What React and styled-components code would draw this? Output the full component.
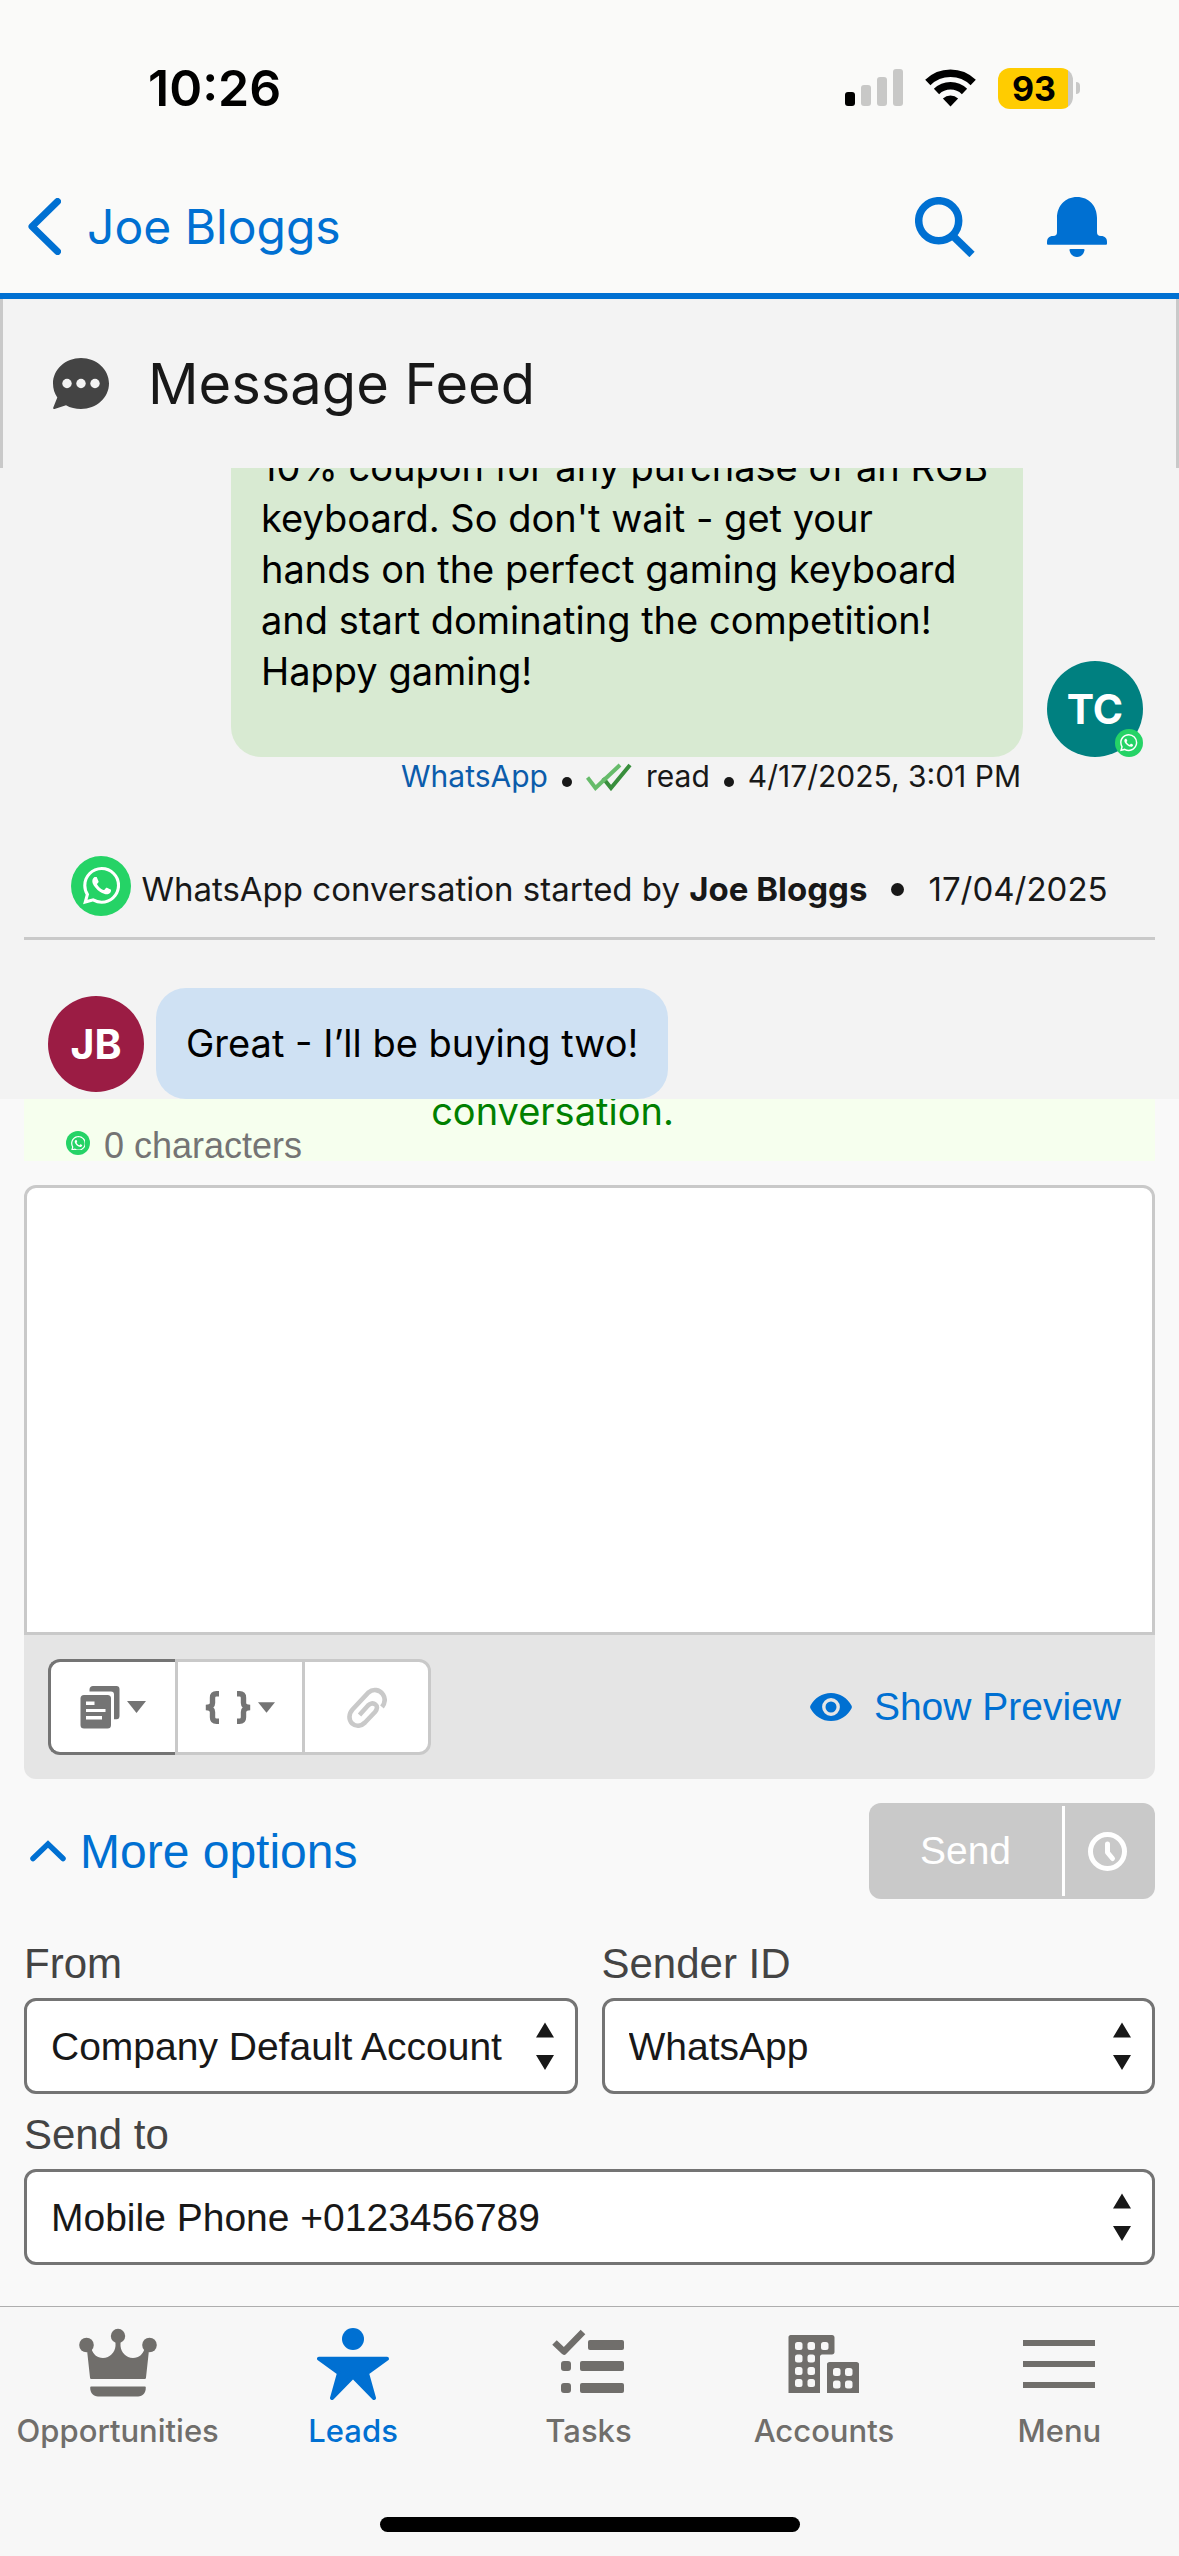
import React from "react";
import styled, { createGlobalStyle } from "styled-components";
import { SiWhatsapp } from "react-icons/si";

const tabs = [
  { id: "opportunities", label: "Opportunities" },
  { id: "leads", label: "Leads", active: true },
  { id: "tasks", label: "Tasks" },
  { id: "accounts", label: "Accounts" },
  { id: "menu", label: "Menu" },
];

const couponText = [
  "10% coupon for any purchase of an RGB",
  "keyboard. So don't wait - get your",
  "hands on the perfect gaming keyboard",
  "and start dominating the competition!",
  "Happy gaming!",
].join("\n");

const App = () => {
  return (
    <Page>
      <GlobalStyle />
      {renderStatusBar()}
      <TitleBar>
        <BackLink href="#lead">
          <BackIcon />
          Joe Bloggs
        </BackLink>
        <TitleActions>
          <IconButton type="button" aria-label="Search">
            <SearchIcon />
          </IconButton>
          <IconButton type="button" aria-label="Notifications">
            <BellIcon />
          </IconButton>
        </TitleActions>
      </TitleBar>
      <FeedHeader>
        <ChatIcon />
        <h1>Message Feed</h1>
      </FeedHeader>
      {renderFeed()}
      {renderComposer()}
      <TabBar>
        <TabList>{tabs.map(renderTab)}</TabList>
        <HomeIndicator />
      </TabBar>
    </Page>
  );
};

const renderStatusBar = () => (
  <StatusBar>
    <Clock>10:26</Clock>
    <StatusIcons>
      <SignalIcon />
      <WifiIcon />
      <Battery>
        <BatteryLevel>93</BatteryLevel>
        <BatteryCap />
      </Battery>
    </StatusIcons>
  </StatusBar>
);

const renderFeed = () => (
  <Feed>
    <Outgoing>
      <Bubble $color="#d8ead2" $grow>
        {couponText}
      </Bubble>
      <Avatar $color="#008080">
        TC
        <AvatarBadge>
          <WhatsAppMark $size={28} />
        </AvatarBadge>
      </Avatar>
    </Outgoing>
    <Meta>
      <a href="#whatsapp">WhatsApp</a>
      <Dot $size={10} $drop />
      <ReadIcon />
      <span>read</span>
      <Dot $size={10} $drop />
      <time>4/17/2025, 3:01 PM</time>
    </Meta>
    <SessionStart>
      <WhatsAppMark $size={60} />
      <span>
        WhatsApp conversation started by <strong>Joe Bloggs</strong>
      </span>
      <Dot $size={13} />
      <time>17/04/2025</time>
    </SessionStart>
    <Incoming>
      <Avatar $color="#9b1c44">JB</Avatar>
      <Bubble $color="#cfe1f3">Great - I’ll be buying two!</Bubble>
    </Incoming>
  </Feed>
);

const renderComposer = () => (
  <Composer>
    <Notice>
      <NoticeText>conversation.</NoticeText>
      <Counter>
        <WhatsAppMark $size={24} />0 characters
      </Counter>
    </Notice>
    <MessageBox aria-label="Message" />
    <Toolbar>
      <ButtonGroup>
        <ToolButton type="button" aria-label="Templates" $focused>
          <TemplateIcon />
          <CaretIcon width="19" height="12" />
        </ToolButton>
        <ToolButton type="button" aria-label="Merge fields">
          <BracesIcon />
          <CaretIcon width="17" height="11" />
        </ToolButton>
        <ToolButton type="button" aria-label="Attach file" disabled>
          <ClipIcon />
        </ToolButton>
      </ButtonGroup>
      <TextButton type="button">
        <EyeIcon />
        Show Preview
      </TextButton>
    </Toolbar>
    <ActionRow>
      <TextButton type="button" $large>
        <ChevronUpIcon />
        More options
      </TextButton>
      <SendGroup>
        <SendButton type="button" disabled>
          Send
        </SendButton>
        <ScheduleButton type="button" aria-label="Schedule" disabled>
          <ClockIcon />
        </ScheduleButton>
      </SendGroup>
    </ActionRow>
    <Fields>
      {renderField("from", "From", "Company Default Account")}
      {renderField("sender", "Sender ID", "WhatsApp")}
      {renderField("sendTo", "Send to", "Mobile Phone +0123456789", true)}
    </Fields>
  </Composer>
);

const renderField = (id, label, value, wide) => (
  <Field $wide={wide}>
    <label htmlFor={id}>{label}</label>
    <SelectBox>
      <select id={id} defaultValue={value}>
        <option>{value}</option>
      </select>
      <svg width="18" height="48" viewBox="0 0 18 48" aria-hidden="true">
        <path d="M9 0.500l9 15H0zM0 33h18l-9 15z" fill="#181818" />
      </svg>
    </SelectBox>
  </Field>
);

const renderTab = ({ id, label, active }) => {
  const Icon = tabIcons[id];
  return (
    <li key={id}>
      <TabLink
        href={`#${id}`}
        $active={active}
        aria-current={active ? "page" : undefined}
      >
        <Icon />
        {label}
      </TabLink>
    </li>
  );
};

const WhatsAppMark = ({ $size }) => (
  <Mark $size={$size}>
    <SiWhatsapp />
  </Mark>
);

const SignalIcon = () => (
  <svg width="58" height="38" viewBox="0 0 58 38" fill="#c8c8c7">
    <rect x="0" y="23" width="10" height="14" rx="3" fill="#000" />
    <rect x="16" y="16" width="10" height="21" rx="3" />
    <rect x="32" y="8" width="10" height="29" rx="3" />
    <rect x="48" y="0" width="10" height="37" rx="3" />
  </svg>
);

const WifiIcon = () => (
  <svg width="51" height="38" viewBox="0 0 51 38">
    <g fill="none" stroke="#000" strokeWidth="7.500">
      <path d="M2.800 13.500a32.500 32.500 0 0 1 45.400 0" />
      <path d="M11.500 22.500a20 20 0 0 1 28 0" />
    </g>
    <path d="M25.500 37.500l-7.600-8a11 11 0 0 1 15.200 0z" />
  </svg>
);

const BackIcon = () => (
  <svg width="33" height="57" viewBox="0 0 33 57">
    <path
      d="M29.500 3.500L4 28.500l25.500 25"
      fill="none"
      stroke="currentColor"
      strokeWidth="7"
      strokeLinecap="round"
      strokeLinejoin="round"
    />
  </svg>
);

const SearchIcon = () => (
  <svg width="60" height="60" viewBox="0 0 60 60">
    <g fill="none" stroke="currentColor" strokeWidth="7.500">
      <circle cx="23.700" cy="23.700" r="20" />
      <path d="M38 39l19 18.500" />
    </g>
  </svg>
);

const BellIcon = () => (
  <svg width="60" height="60" viewBox="0 0 60 60" fill="currentColor">
    <path d="M30 0c12 0 20 9 20 21v14c0 2.500 1 4 4 4 4 0 6 2.500 6 6v1.500c0 .8-.5 1.300-1.300 1.300H1.300C.5 47.800 0 47.300 0 46.500V45c0-3.500 2-6 6-6 3 0 4-1.500 4-4V21C10 9 18 0 30 0z" />
    <path d="M23.500 52h13c.8 0 1.200.5 1 1.200-.7 4-3.700 6.800-7.500 6.800s-6.800-2.800-7.500-6.800c-.2-.7.200-1.200 1-1.200z" />
  </svg>
);

const ChatIcon = () => (
  <svg width="56" height="52" viewBox="0 0 56 52">
    <path
      d="M28 0c15.500 0 28 11.400 28 25.500S43.500 51 28 51c-5.500 0-10.700-1.200-15-3.800L1.500 51c-1 .3-1.600-.3-1.300-1.200L4.300 39.500C1.500 35.500 0 30.700 0 25.500 0 11.400 12.500 0 28 0z"
      fill="#444"
    />
    <g fill="#f3f3f3">
      <circle cx="14" cy="25.500" r="4.700" />
      <circle cx="28" cy="25.500" r="4.700" />
      <circle cx="42" cy="25.500" r="4.700" />
    </g>
  </svg>
);

const ReadIcon = () => (
  <svg width="46" height="28" viewBox="0 0 46 28">
    <g fill="none" strokeWidth="4">
      <path d="M17 15l8 10L44 2" stroke="#388e3c" />
      <path d="M1.500 14.500L9.500 25 34 2" stroke="#66bb6a" />
    </g>
  </svg>
);

const TemplateIcon = () => (
  <svg width="40" height="43" viewBox="0 0 40 43" fill="currentColor">
    <path d="M13 0h23.500c1.800 0 3 1.200 3 3v27c0 2-1 3.300-3 3.300H34V8.500c0-2-1-3-3-3H9.500V3.500C9.500 1.300 11 0 13 0z" />
    <rect x="0.500" y="9" width="30.500" height="33.500" rx="3.500" />
    <path
      d="M6 15.500h8.500V19H6zM6 23h19.500v3H6zM6 30h16v3.500H6z"
      fill="#fff"
    />
  </svg>
);

const BracesIcon = () => (
  <svg width="46" height="33" viewBox="0 0 46 33">
    <g fill="none" stroke="currentColor" strokeWidth="5.400">
      <path d="M14 2.700h-2.500q-4 0-4 4v5.300q0 4-6.500 4.500 6.500.5 6.500 4.500v5.300q0 4 4 4h2.500" />
      <path d="M32 2.700h2.500q4 0 4 4v5.300q0 4 6.500 4.500-6.500.5-6.500 4.500v5.300q0 4-4 4h-2.500" />
    </g>
  </svg>
);

const CaretIcon = (props) => (
  <svg viewBox="0 0 19 12" fill="currentColor" {...props}>
    <path d="M0 0h19l-9.500 12z" />
  </svg>
);

const ClipIcon = () => (
  <svg width="40" height="41" viewBox="0 0 40 41">
    <path
      d="M35 20c3-4 3.500-8.500 1-12.500C32.500 2.500 26 1.500 21.500 5.500L5.500 22.500C1.500 27 1.500 33 5.200 36.500c4 3.500 9.300 2.500 12.800-1L28 25c2.500-3 2.500-6 .5-7.500-2.500-2-5.500-1-7.500 1L12.500 28"
      fill="none"
      stroke="currentColor"
      strokeWidth="4.600"
    />
  </svg>
);

const EyeIcon = () => (
  <svg width="42" height="28" viewBox="0 0 42 28">
    <path
      d="M.400 12.800C4.500 5 12.200 0 21 0s16.500 5 20.600 12.800c.4.800.4 1.600 0 2.400C37.500 23 29.800 28 21 28S4.500 23 .4 15.200c-.4-.8-.4-1.600 0-2.400z"
      fill="currentColor"
    />
    <circle
      cx="21"
      cy="14"
      r="7.200"
      fill="currentColor"
      stroke="#e5e5e5"
      strokeWidth="3.400"
    />
  </svg>
);

const ChevronUpIcon = () => (
  <svg width="36" height="22" viewBox="0 0 36 22">
    <path
      d="M3 18.500L18 4l15 14.500"
      fill="none"
      stroke="currentColor"
      strokeWidth="5.500"
      strokeLinecap="round"
    />
  </svg>
);

const ClockIcon = () => (
  <svg width="39" height="39" viewBox="0 0 39 39">
    <g fill="none" stroke="currentColor" strokeWidth="5">
      <circle cx="19.500" cy="19.500" r="17" />
      <path
        d="M19.500 12v8.500l5 6"
        strokeLinecap="round"
        strokeLinejoin="round"
      />
    </g>
  </svg>
);

const CrownIcon = () => (
  <svg width="78" height="72" viewBox="0 0 78 72" fill="currentColor">
    <circle cx="7.500" cy="17" r="7.300" />
    <circle cx="39" cy="8" r="7.200" />
    <circle cx="70.500" cy="17" r="7.300" />
    <path d="M8 22l4.500-1C14 26 18 30 24 30c7 0 12-6 12.500-12V12h5v6C42 24 47 30 54 30c6 0 10-4 11.500-9l4.500 1-3 27.500c-.1 1-.7 1.500-1.500 1.500h-53c-.8 0-1.400-.5-1.500-1.500z" />
    <path d="M12.500 58.500h53c.9 0 1.300.5 1.300 1.300 0 5-3 8.700-7.800 8.700H19c-4.800 0-7.800-3.700-7.800-8.700 0-.8.400-1.300 1.300-1.300z" />
  </svg>
);

const PersonIcon = () => (
  <svg width="72" height="72" viewBox="0 0 72 72" fill="currentColor">
    <circle cx="36" cy="11" r="11" />
    <path
      d="M2 30.700h68L50 45l7 25-21-21.500L15 70l7-25z"
      stroke="currentColor"
      strokeWidth="4"
      strokeLinejoin="round"
    />
  </svg>
);

const TaskIcon = () => (
  <svg width="72" height="72" viewBox="0 0 72 72" fill="currentColor">
    <path
      d="M2.500 14.500l9.500 9L31 4"
      fill="none"
      stroke="currentColor"
      strokeWidth="6.500"
      strokeLinejoin="round"
    />
    <rect x="36" y="12" width="36" height="10" rx="2" />
    <rect x="9" y="33" width="10" height="10" rx="3" />
    <rect x="28" y="33" width="44" height="10" rx="2" />
    <rect x="9" y="55" width="10" height="10" rx="3" />
    <rect x="28" y="55" width="44" height="10" rx="2" />
  </svg>
);

const windows = [
  [7, 14], [19.5, 14], [33, 14],
  [7, 26.500], [19.5, 26.500],
  [7, 39], [19.5, 39],
  [7, 51], [19.5, 51],
  [45, 40], [57, 40],
  [45, 52.500], [57, 52.500],
];

const BuildingIcon = () => (
  <svg width="71" height="72" viewBox="0 0 71 72" fill="currentColor">
    <path d="M2.500 7H44c1.500 0 2.500 1 2.500 2.500V24c0 1.500-1 2.500-2.500 2.500H34c-1 0-2 1-2 2V65H.500V9C.5 8 1.500 7 2.500 7z" />
    <path d="M41.500 34h27c1.500 0 2.500 1 2.500 2v29H39V36c0-1 1-2 2.500-2z" />
    {windows.map(([x, y]) => (
      <rect
        key={`${x}-${y}`}
        x={x}
        y={y}
        width="7.500"
        height="8"
        rx="2.500"
        fill="#f7f7f7"
      />
    ))}
  </svg>
);

const MenuIcon = () => (
  <svg width="72" height="72" viewBox="0 0 72 72" fill="currentColor">
    <path d="M0 12h72v6H0zM0 33h72v6H0zM0 54h72v6H0z" />
  </svg>
);

const tabIcons = {
  opportunities: CrownIcon,
  leads: PersonIcon,
  tasks: TaskIcon,
  accounts: BuildingIcon,
  menu: MenuIcon,
};

const GlobalStyle = createGlobalStyle`
  * {
    box-sizing: border-box;
  }
  body {
    margin: 0;
    background: #f9f9f9;
    color: #181818;
    font-family: Inter, "Liberation Sans", sans-serif;
  }
  button, textarea, select {
    font-family: "Liberation Sans", Arial, sans-serif;
  }
  svg {
    display: block;
    flex-shrink: 0;
  }
`;

const Page = styled.div`
  display: flex;
  flex-direction: column;
  height: 100vh;
  overflow: hidden;
`;

const StatusBar = styled.div`
  display: flex;
  align-items: center;
  justify-content: space-between;
  height: 160px;
  flex-shrink: 0;
  padding: 16px 99px 0 148px;
  background: #fafaf9;
`;
const Clock = styled.time`
  color: #000;
  font-size: 50px;
  font-weight: 600;
`;
const StatusIcons = styled.div`
  display: flex;
  align-items: center;
  gap: 22px;
`;
const Battery = styled.div`
  display: flex;
  align-items: center;
  gap: 3px;
`;
const BatteryLevel = styled.span`
  width: 75px;
  height: 41px;
  padding-right: 3px;
  border-radius: 12px;
  background: linear-gradient(90deg, #ffcc00 70px, #c8c8c7 70px);
  color: #000;
  font-size: 34px;
  font-weight: 700;
  line-height: 41px;
  text-align: center;
`;
const BatteryCap = styled.span`
  width: 4px;
  height: 12px;
  border-radius: 0 4px 4px 0;
  background: #c8c8c7;
`;

const TitleBar = styled.header`
  display: flex;
  align-items: center;
  justify-content: space-between;
  height: 139px;
  flex-shrink: 0;
  padding: 0 72px 0 28px;
  border-bottom: 6px solid #0070d2;
  background: #fafaf9;
`;
const BackLink = styled.a`
  display: flex;
  align-items: center;
  gap: 26px;
  color: #0070d2;
  font-size: 48px;
  text-decoration: none;
`;
const TitleActions = styled.div`
  display: flex;
  gap: 72px;
`;
const IconButton = styled.button`
  padding: 0;
  border: 0;
  background: none;
  color: #0070d2;
`;

const FeedHeader = styled.div`
  display: flex;
  align-items: center;
  gap: 39px;
  height: 169px;
  flex-shrink: 0;
  padding: 0 50px;
  border: solid #c9c9c9;
  border-width: 0 3px;
  background: #f3f3f3;
  & > h1 {
    margin: 0;
    font-size: 56px;
    font-weight: 400;
  }
`;

const Feed = styled.main`
  display: flex;
  flex: 1;
  flex-direction: column;
  justify-content: flex-end;
  min-height: 0;
  overflow: hidden;
  background: #f3f3f3;
`;
const Outgoing = styled.div`
  display: flex;
  align-items: flex-end;
  gap: 24px;
  padding: 0 36px 0 231px;
`;
const Incoming = styled.div`
  display: flex;
  align-items: center;
  gap: 12px;
  padding: 48px 48px 0;
`;
const Bubble = styled.div`
  flex: ${({ $grow }) => ($grow ? 1 : "none")};
  padding: ${({ $grow }) => ($grow ? "30px 30px 60px" : "30px")};
  border-radius: 30px;
  background: ${({ $color }) => $color};
  color: #000;
  font-size: 38px;
  line-height: 51px;
  white-space: pre-line;
`;
const Avatar = styled.div`
  position: relative;
  display: flex;
  align-items: center;
  justify-content: center;
  width: 96px;
  height: 96px;
  flex-shrink: 0;
  border-radius: 50%;
  background: ${({ $color }) => $color};
  color: #fff;
  font-size: 41px;
  font-weight: 700;
`;
const AvatarBadge = styled.span`
  position: absolute;
  right: 0;
  bottom: 0;
`;
const Mark = styled.span`
  display: flex;
  align-items: center;
  justify-content: center;
  width: ${({ $size }) => $size}px;
  height: ${({ $size }) => $size}px;
  flex-shrink: 0;
  border-radius: 50%;
  background: #25d366;
  color: #fff;
  & > svg {
    width: 62%;
    height: 62%;
  }
`;
const Meta = styled.div`
  display: flex;
  align-items: center;
  justify-content: flex-end;
  gap: 14px;
  margin-bottom: 60px;
  padding-right: 158px;
  font-size: 30px;
  line-height: 39px;
  & > a {
    color: #0b5cab;
    text-decoration: none;
  }
`;
const Dot = styled.span`
  width: ${({ $size }) => $size}px;
  height: ${({ $size }) => $size}px;
  margin-top: ${({ $drop }) => ($drop ? "10px" : 0)};
  border-radius: 50%;
  background: #181818;
`;
const SessionStart = styled.div`
  display: flex;
  align-items: flex-end;
  justify-content: center;
  margin: 0 24px;
  padding-bottom: 21px;
  border-bottom: 3px solid #c9c9c9;
  font-size: 33px;
  line-height: 54px;
  & > span:first-child {
    margin-right: 10px;
  }
  & > ${Dot} {
    margin: 0 24px 20px;
  }
`;

const Composer = styled.form`
  flex-shrink: 0;
  padding: 0 24px 41px;
  font-family: "Liberation Sans", Arial, sans-serif;
`;
const Notice = styled.div`
  display: flex;
  flex-direction: column;
  justify-content: flex-end;
  height: 62px;
  margin-bottom: 24px;
  overflow: hidden;
  background: #f6ffee;
`;
const NoticeText = styled.p`
  flex-shrink: 0;
  margin: 0;
  padding-right: 74px;
  color: #008000;
  font-family: Inter, sans-serif;
  font-size: 38px;
  line-height: 40px;
  text-align: center;
`;
const Counter = styled.div`
  display: flex;
  align-items: flex-start;
  gap: 14px;
  flex-shrink: 0;
  padding-left: 42px;
  color: #747474;
  font-size: 36px;
  line-height: 30px;
`;
const MessageBox = styled.textarea`
  display: block;
  width: 100%;
  height: 450px;
  padding: 24px;
  border: 3px solid #c9c9c9;
  border-radius: 12px 12px 0 0;
  background: #fff;
  font-size: 39px;
  outline: none;
  resize: none;
`;
const Toolbar = styled.div`
  display: flex;
  align-items: center;
  justify-content: space-between;
  height: 144px;
  padding: 0 34px 0 24px;
  border-radius: 0 0 12px 12px;
  background: #e5e5e5;
`;
const ButtonGroup = styled.div`
  display: flex;
`;
const ToolButton = styled.button`
  display: flex;
  align-items: center;
  justify-content: center;
  gap: 7px;
  width: 127px;
  height: 96px;
  padding: 0;
  border: 3px solid ${({ $focused }) => ($focused ? "#747474" : "#c9c9c9")};
  border-right-width: 0;
  background: #fff;
  color: #747474;
  &:first-child {
    border-radius: 12px 0 0 12px;
  }
  &:last-child {
    width: 129px;
    border-right-width: 3px;
    border-radius: 0 12px 12px 0;
  }
  &:disabled {
    color: #c9c9c9;
  }
`;
const TextButton = styled.button`
  display: flex;
  align-items: center;
  gap: ${({ $large }) => ($large ? 14 : 22)}px;
  padding: 0;
  border: 0;
  background: none;
  color: #0070d2;
  font-size: ${({ $large }) => ($large ? 48 : 39)}px;
`;
const ActionRow = styled.div`
  display: flex;
  align-items: center;
  justify-content: space-between;
  margin: 24px 0 39px;
  padding-left: 6px;
`;
const SendGroup = styled.div`
  display: flex;
  height: 96px;
  padding: 3px 0;
  border-radius: 12px;
  background: #c9c9c9;
`;
const SendButton = styled.button`
  width: 193px;
  padding: 0;
  border: 0;
  background: none;
  color: #fff;
  font-size: 39px;
`;
const ScheduleButton = styled.button`
  display: flex;
  align-items: center;
  justify-content: center;
  width: 93px;
  padding: 0 6px 0 0;
  border: 0;
  border-left: 3px solid #fff;
  background: none;
  color: #fff;
`;
const Fields = styled.div`
  display: grid;
  grid-template-columns: 1fr 1fr;
  gap: 15px 24px;
`;
const Field = styled.div`
  grid-column: ${({ $wide }) => ($wide ? "1 / -1" : "auto")};
  & > label {
    display: block;
    margin-bottom: 8px;
    color: #444;
    font-size: 42px;
    line-height: 52px;
  }
`;
const SelectBox = styled.div`
  display: grid;
  align-items: center;
  & > select {
    grid-area: 1 / 1;
    appearance: none;
    width: 100%;
    height: 96px;
    padding: 0 60px 0 24px;
    border: 3px solid #747474;
    border-radius: 12px;
    background: #fff;
    color: #181818;
    font-size: 39px;
  }
  & > svg {
    grid-area: 1 / 1;
    justify-self: end;
    margin-right: 24px;
    pointer-events: none;
  }
`;

const TabBar = styled.footer`
  flex-shrink: 0;
  padding-bottom: 24px;
  border-top: 1px solid #aeaeae;
  background: #f7f7f7;
`;
const TabList = styled.ul`
  display: grid;
  grid-template-columns: repeat(5, 1fr);
  height: 210px;
  margin: 0;
  padding: 21px 2px 0 0;
  list-style: none;
`;
const TabLink = styled.a`
  display: flex;
  flex-direction: column;
  align-items: center;
  gap: 12px;
  color: ${({ $active }) => ($active ? "#0070d2" : "#706e6b")};
  font-size: 31px;
  font-weight: 500;
  line-height: 38px;
  text-decoration: none;
`;
const HomeIndicator = styled.div`
  width: 420px;
  height: 15px;
  margin: 0 auto;
  border-radius: 8px;
  background: #000;
`;

export default App;
